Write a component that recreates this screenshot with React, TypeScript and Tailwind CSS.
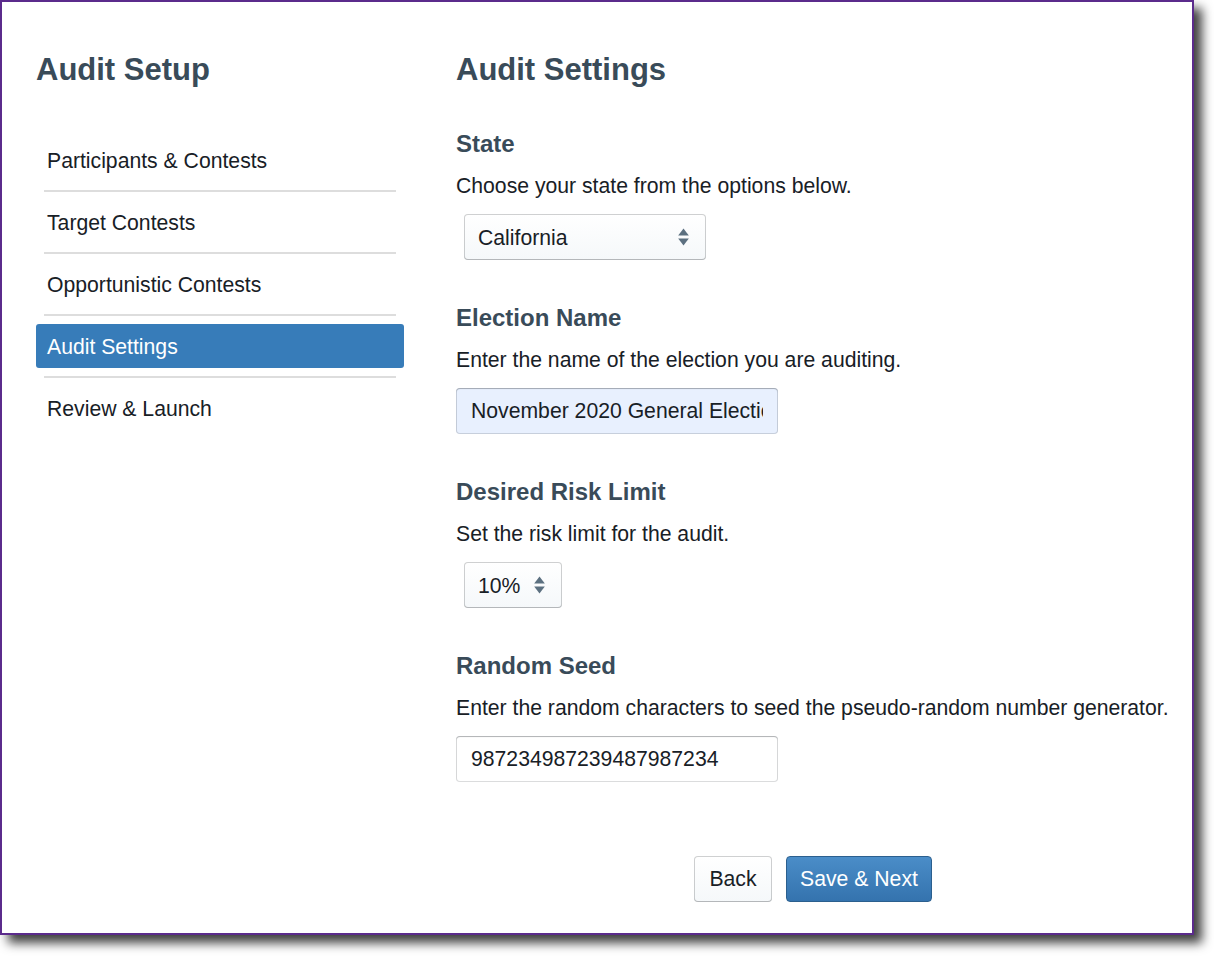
import React from 'react';

const navItems = [
  'Participants & Contests',
  'Target Contests',
  'Opportunistic Contests',
  'Audit Settings',
  'Review & Launch',
];

const Caret = () => (
  <svg
    width="11"
    height="18"
    viewBox="0 0 11 18"
    className="pointer-events-none absolute right-[17px] top-1/2 -translate-y-1/2"
  >
    <path d="M5.5 0.5 L10.8 7.5 H0.2 Z" fill="#5c7080" />
    <path d="M5.5 17.5 L10.8 10.5 H0.2 Z" fill="#5c7080" />
  </svg>
);

const Section = ({ title, hint, children }: { title: string; hint: string; children: React.ReactNode }) => (
  <div className="mb-[43px] flex flex-col">
    <h3 className="text-[24px] leading-[29px] font-bold text-[#394b59]">{title}</h3>
    <p className="mt-[13px] whitespace-nowrap text-[21.2px] leading-[30px] text-[#182026]">{hint}</p>
    <div className="mt-[13px]">{children}</div>
  </div>
);

const selectCls =
  'h-[46px] appearance-none rounded-[4px] bg-gradient-to-b from-white to-[#f5f8fa] pl-[14px] pt-[1px] text-[21.2px] text-[#182026] shadow-[inset_0_0_0_1px_rgba(16,22,26,0.2),inset_0_-1px_0_rgba(16,22,26,0.1)] outline-none';

const inputCls =
  'h-[46px] w-[322px] rounded-[4px] px-[15px] text-[21.2px] text-[#182026] shadow-[inset_0_0_0_1px_rgba(16,22,26,0.15),inset_0_1px_1px_rgba(16,22,26,0.2)] outline-none';

export default function App() {
  return (
    <div className="min-h-[956px] bg-white font-['Liberation_Sans',Arial,sans-serif]">
      <div className="h-[935px] w-[1194px] border-2 border-[#5b2b8c] bg-white shadow-[8px_8px_10px_rgba(0,0,0,0.75)]">
        <div className="flex pl-[34px] pr-[22px] pt-[49px]">
          {/* Sidebar */}
          <div className="w-[368px] shrink-0">
            <h1 className="text-[31px] leading-[37px] font-bold text-[#394b59]">Audit Setup</h1>
            <ul className="mt-[50px]">
              {navItems.map((item, i) => (
                <li key={item}>
                  <div
                    className={
                      item === 'Audit Settings'
                        ? 'flex h-[44px] items-center rounded-[3px] bg-[#377cb9] px-[11px] pt-[2px] text-[21.2px] text-white'
                        : 'flex h-[44px] items-center px-[11px] pt-[2px] text-[21.2px] text-[#182026]'
                    }
                  >
                    {item}
                  </div>
                  {i < navItems.length - 1 && <div className="mx-[8px] my-[8px] h-[2px] bg-[#dddddd]" />}
                </li>
              ))}
            </ul>
          </div>

          {/* Main */}
          <div className="ml-[52px] min-w-0 flex-1">
            <h2 className="mb-[41px] text-[31px] leading-[37px] font-bold text-[#394b59]">Audit Settings</h2>

            <Section title="State" hint="Choose your state from the options below.">
              <div className="relative ml-[8px] w-[242px]">
                <select className={`${selectCls} w-[242px]`} defaultValue="CA">
                  <option value="CA">California</option>
                </select>
                <Caret />
              </div>
            </Section>

            <Section title="Election Name" hint="Enter the name of the election you are auditing.">
              <input className={`${inputCls} bg-[#e8f0fe]`} defaultValue="November 2020 General Election" />
            </Section>

            <Section title="Desired Risk Limit" hint="Set the risk limit for the audit.">
              <div className="relative ml-[8px] w-[98px]">
                <select className={`${selectCls} w-[98px]`} defaultValue="10">
                  <option value="10">10%</option>
                </select>
                <Caret />
              </div>
            </Section>

            <Section title="Random Seed" hint="Enter the random characters to seed the pseudo-random number generator.">
              <input className={`${inputCls} bg-white`} defaultValue="987234987239487987234" />
            </Section>

            <div className="mt-[74px] flex justify-center gap-[14px]">
              <button className="h-[46px] w-[78px] rounded-[4px] bg-gradient-to-b from-white to-[#f5f8fa] text-[21.2px] text-[#182026] shadow-[inset_0_0_0_1px_rgba(16,22,26,0.2),inset_0_-1px_0_rgba(16,22,26,0.1)]">
                Back
              </button>
              <button className="h-[46px] w-[146px] rounded-[4px] border border-[#2b5f8e] bg-gradient-to-b from-[#4a8dc8] to-[#3473ae] text-[21.2px] text-white">
                Save &amp; Next
              </button>
            </div>
          </div>
        </div>
      </div>
    </div>
  );
}
